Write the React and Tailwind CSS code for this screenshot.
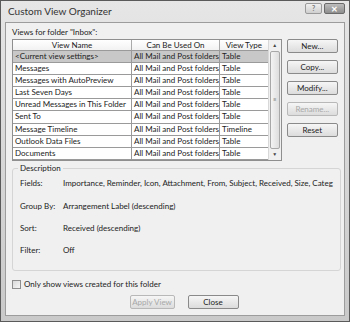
import React from "react";

const rows = [
  ["<Current view settings>", "All Mail and Post folders", "Table"],
  ["Messages", "All Mail and Post folders", "Table"],
  ["Messages with AutoPreview", "All Mail and Post folders", "Table"],
  ["Last Seven Days", "All Mail and Post folders", "Table"],
  ["Unread Messages in This Folder", "All Mail and Post folders", "Table"],
  ["Sent To", "All Mail and Post folders", "Table"],
  ["Message Timeline", "All Mail and Post folders", "Timeline"],
  ["Outlook Data Files", "All Mail and Post folders", "Table"],
  ["Documents", "All Mail and Post folders", "Table"],
];

function Btn({ children, disabled, className = "" }) {
  return (
    <div
      className={`flex h-[14px] items-center justify-center rounded-[2px] border bg-gradient-to-b from-[#f6f6f6] to-[#dcdcdc] text-[8px] leading-none ${
        disabled ? "border-[#b8b8b8] text-[#a8a8a8]" : "border-[#8a8a8a] text-[#222]"
      } ${className}`}
    >
      {children}
    </div>
  );
}

export default function App() {
  return (
    <div
      className="relative h-[322px] w-[350px] overflow-hidden border border-[#5a5a5a] bg-gradient-to-b from-[#e6e6e6] to-[#c9c9c9] text-[#222]"
      style={{ fontFamily: 'Lato, "Liberation Sans", sans-serif' }}
    >
      {/* title bar */}
      <div className="flex h-[21px] items-center justify-between pl-[7px] pr-[4px]">
        <span className="text-[10px] text-[#333]">Custom View Organizer</span>
        <div className="flex gap-[2px] self-start pt-[2px]">
          <div className="flex h-[11px] w-[17px] items-center justify-center rounded-[2px] border border-[#9a9a9a] bg-gradient-to-b from-[#f0f0f0] to-[#cfcfcf] text-[7px] font-bold leading-none text-[#777]">
            ?
          </div>
          <div className="flex h-[11px] w-[21px] items-center justify-center rounded-[2px] border border-[#6a6a6a] bg-gradient-to-b from-[#bdbdbd] to-[#8e8e8e] text-[8px] font-bold leading-none text-white">
            ✕
          </div>
        </div>
      </div>
      {/* client */}
      <div className="mx-[4px] flex h-[294px] flex-col border border-[#9c9c9c] bg-[#f0f0f0] px-[6px] pt-[3px]">
        <div className="h-[13px] text-[8px] leading-[13px]">Views for folder "Inbox":</div>
        <div className="flex gap-[5px]">
          {/* list */}
          <div className="flex h-[122px] w-[273px] border border-[#8f8f8f] bg-white">
            <div className="flex-1">
              <div className="flex h-[11px] border-b border-[#9a9a9a] bg-gradient-to-b from-white to-[#f2f2f2] text-[8px] leading-[11px]">
                <div className="w-[119px] border-r border-[#aaa] text-center">View Name</div>
                <div className="w-[88px] border-r border-[#aaa] text-center">Can Be Used On</div>
                <div className="flex-1 text-center">View Type</div>
              </div>
              {rows.map((r, i) => (
                <div
                  key={i}
                  className={`flex h-[12.1px] text-[8px] leading-[11px] ${
                    i === 0 ? "bg-[#c8c8c8]" : ""
                  }`}
                >
                  <div className="w-[119px] overflow-hidden whitespace-nowrap border-b border-r border-[#9a9a9a] pl-[2px]">
                    {r[0]}
                  </div>
                  <div className="w-[88px] overflow-hidden whitespace-nowrap border-b border-r border-[#9a9a9a] pl-[2px]">{r[1]}</div>
                  <div className="flex-1 overflow-hidden whitespace-nowrap border-b border-[#9a9a9a] pl-[2px]">{r[2]}</div>
                </div>
              ))}
            </div>
            {/* scrollbar */}
            <div className="flex w-[13px] flex-col border-l border-[#d8d8d8] bg-[#f0f0f0]">
              <div className="flex h-[11px] items-center justify-center text-[5px] text-[#444]">▲</div>
              <div className="mx-[1px] flex flex-1 items-center justify-center rounded-[2px] border border-[#a8a8a8] bg-gradient-to-r from-[#f4f4f4] to-[#dedede] text-[6px] leading-none text-[#888]">
                ≡
              </div>
              <div className="flex h-[11px] items-center justify-center text-[5px] text-[#444]">▼</div>
            </div>
          </div>
          {/* buttons */}
          <div className="flex w-[52px] flex-col gap-[7px]">
            <Btn>New...</Btn>
            <Btn>Copy...</Btn>
            <Btn>Modify...</Btn>
            <Btn disabled>Rename...</Btn>
            <Btn>Reset</Btn>
          </div>
        </div>
        {/* description */}
        <div className="relative mt-[7px] h-[103px] w-[329px] rounded-[3px] border border-[#d5d5d5] pl-[7px] pt-[8px] text-[8px]">
          <span className="absolute left-[5px] top-[-6px] bg-[#f0f0f0] px-[2px] leading-[11px]">Description</span>
          <div className="flex h-[12px] items-center whitespace-nowrap">
            <span className="w-[43px]">Fields:</span>
            <span>Importance, Reminder, Icon, Attachment, From, Subject, Received, Size, Categ</span>
          </div>
          <div className="mt-[11px] flex h-[12px] items-center">
            <span className="w-[43px]">Group By:</span>
            <span>Arrangement Label (descending)</span>
          </div>
          <div className="mt-[10px] flex h-[12px] items-center">
            <span className="w-[43px]">Sort:</span>
            <span>Received (descending)</span>
          </div>
          <div className="mt-[10px] flex h-[12px] items-center">
            <span className="w-[43px]">Filter:</span>
            <span>Off</span>
          </div>
        </div>
        <div className="mt-[7px] flex items-center gap-[3px] text-[8px]">
          <div className="h-[9px] w-[9px] border border-[#8e8e8e] bg-gradient-to-br from-[#d9d9d9] to-[#f5f5f5]" />
          <span>Only show views created for this folder</span>
        </div>
        <div className="mt-[5px] flex justify-center gap-[13px] pl-[18px]">
          <Btn disabled className="w-[45px]">Apply View</Btn>
          <Btn className="w-[51px]">Close</Btn>
        </div>
      </div>
    </div>
  );
}
